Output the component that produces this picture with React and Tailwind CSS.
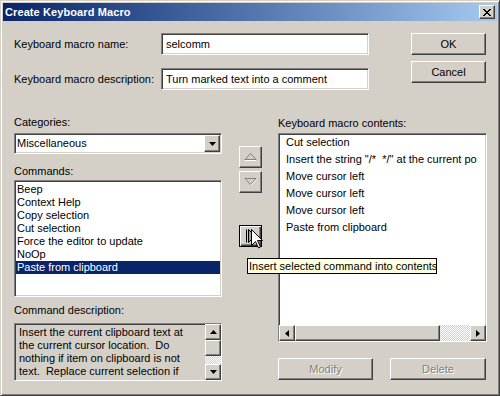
import React from 'react';

const sunken =
  'border border-t-[#808080] border-l-[#808080] border-r-white border-b-white shadow-[inset_1px_1px_0_#404040,inset_-1px_-1px_0_#d4d0c8]';
const raised =
  'border border-t-white border-l-white border-r-[#404040] border-b-[#404040] shadow-[inset_-1px_-1px_0_#808080]';
const dither =
  'bg-[repeating-conic-gradient(#ffffff_0_25%,#d4d0c8_0_50%)] bg-[length:2px_2px]';

function Arrow({ dir }) {
  const paths = {
    up: 'M3.5 0 L7 4 H0 Z',
    down: 'M0 0 H7 L3.5 4 Z',
    left: 'M4 0 V7 L0 3.5 Z',
    right: 'M0 0 V7 L4 3.5 Z',
  };
  const size = dir === 'up' || dir === 'down' ? [7, 4] : [4, 7];
  return (
    <svg width={size[0]} height={size[1]} viewBox={`0 0 ${size[0]} ${size[1]}`}>
      <path d={paths[dir]} fill="#000" />
    </svg>
  );
}

function ScrollButton({ dir, className = '' }) {
  return (
    <div className={`${raised} bg-[#d4d0c8] flex items-center justify-center ${className}`}>
      <Arrow dir={dir} />
    </div>
  );
}

function DisabledTriangle({ up }) {
  return (
    <svg width="13" height="8" viewBox="0 0 13 8">
      {up ? (
        <>
          <path d="M1 7.5 H12" stroke="#fff" />
          <path d="M6.5 0.5 L12 6.5 H1 Z" fill="#d4d0c8" stroke="#808080" />
        </>
      ) : (
        <>
          <path d="M7 7.5 L12.5 1" stroke="#fff" />
          <path d="M1 0.5 H12 L6.5 6.5 Z" fill="#d4d0c8" stroke="#808080" />
        </>
      )}
    </svg>
  );
}

export default function App() {
  const commands = [
    'Beep',
    'Context Help',
    'Copy selection',
    'Cut selection',
    'Force the editor to update',
    'NoOp',
    'Paste from clipboard',
  ];
  const contents = [
    'Cut selection',
    'Insert the string "/*\u00a0 */" at the current po',
    'Move cursor left',
    'Move cursor left',
    'Move cursor left',
    'Paste from clipboard',
  ];

  return (
    <div className="w-[500px] h-[396px] bg-[#d4d0c8] border border-t-[#d4d0c8] border-l-[#d4d0c8] border-r-[#404040] border-b-[#404040] shadow-[inset_1px_1px_0_#fff,inset_-1px_-1px_0_#808080] p-[2px] font-['Liberation_Sans',Arial,sans-serif] text-[11px] leading-[13px] text-black flex flex-col">
      {/* Title bar */}
      <div className="h-[18px] flex items-center justify-between bg-linear-to-r from-[#0a246a] to-[#a6caf0] pl-[2px] pr-[2px]">
        <span className="text-white font-bold text-[11px] tracking-[0.1px]">Create Keyboard Macro</span>
        <div className={`${raised} bg-[#d4d0c8] w-[16px] h-[14px] flex items-center justify-center`}>
          <svg width="8" height="7" viewBox="0 0 8 7">
            <path d="M0 0 L7 7 M1 0 L8 7 M7 0 L0 7 M8 0 L1 7" stroke="#000" strokeWidth="1" />
          </svg>
        </div>
      </div>

      {/* Name / description + OK, Cancel */}
      <div className="flex pl-[11px]">
        <div className="flex flex-col mt-[12px]">
          <div className="flex items-center h-[22px]">
            <span className="w-[147px]">Keyboard macro name:</span>
            <div className={`${sunken} bg-white w-[208px] h-[22px] pl-[4px] flex items-center`}>selcomm</div>
          </div>
          <div className="flex items-center h-[22px] mt-[13px]">
            <span className="w-[147px]">Keyboard macro description:</span>
            <div className={`${sunken} bg-white w-[208px] h-[22px] pl-[4px] flex items-center`}>
              Turn marked text into a comment
            </div>
          </div>
        </div>
        <div className="flex flex-col mt-[12px] ml-[42px]">
          <button className={`${raised} bg-[#d4d0c8] w-[75px] h-[22px]`}>OK</button>
          <button className={`${raised} bg-[#d4d0c8] w-[75px] h-[22px] mt-[6px]`}>Cancel</button>
        </div>
      </div>

      {/* Main section */}
      <div className="flex pl-[11px]">
        {/* Left column */}
        <div className="flex flex-col w-[208px]">
          <div className="mt-[26px] h-[13px]">Categories:</div>
          <div className={`${sunken} bg-white h-[21px] mt-[4px] flex items-center justify-between pr-[1px]`}>
            <span className="pl-[2px]">Miscellaneous</span>
            <ScrollButton dir="down" className="w-[16px] h-[17px]" />
          </div>
          <div className="mt-[11px] h-[13px]">Commands:</div>
          <div className={`${sunken} bg-white h-[117px] mt-[2px] px-[1px] pt-[2px]`}>
            {commands.map((c, i) => (
              <div
                key={i}
                className={`h-[13px] pl-[1px] ${i === 6 ? 'bg-[#0a246a] text-white' : ''}`}
              >
                {c}
              </div>
            ))}
          </div>
          <div className="mt-[7px] h-[13px]">Command description:</div>
          <div className={`${sunken} h-[58px] mt-[6px] flex`}>
            <div className="flex-1 pl-[4px] pt-[2px]">
              Insert the current clipboard text at
              <br />
              the current cursor location.&nbsp; Do
              <br />
              nothing if item on clipboard is not
              <br />
              text.&nbsp; Replace current selection if
            </div>
            <div className="w-[16px] flex flex-col">
              <ScrollButton dir="up" className="h-[16px]" />
              <div className={`${raised} bg-[#d4d0c8] h-[16px]`} />
              <div className={`${dither} flex-1`} />
              <ScrollButton dir="down" className="h-[16px]" />
            </div>
          </div>
        </div>

        {/* Middle column */}
        <div className="flex flex-col w-[23px] ml-[17px]">
          <div className={`${raised} bg-[#d4d0c8] h-[22px] mt-[56px] flex items-center justify-center`}>
            <DisabledTriangle up />
          </div>
          <div className={`${raised} bg-[#d4d0c8] h-[22px] mt-[3px] flex items-center justify-center`}>
            <DisabledTriangle />
          </div>
          <div className="relative mt-[32px]">
            <div className="border border-black h-[22px] bg-[#d4d0c8] shadow-[inset_1px_1px_0_#fff,inset_-1px_-1px_0_#404040,inset_-2px_-2px_0_#808080] flex items-center justify-center">
              <svg width="11" height="14" viewBox="0 0 11 14">
                <path d="M1.5 0.5 V13.5" stroke="#000" />
                <path d="M3.5 0.5 L10 7 L3.5 13.5 Z" fill="#a0a0a0" stroke="#000" />
              </svg>
            </div>
            {/* mouse cursor */}
            <svg className="absolute left-[12px] top-[4px]" width="12" height="20" viewBox="0 0 12 20">
              <path
                d="M0.5 0.5 V16.5 L4.5 12.5 L7.5 19 L9.5 18 L6.5 11.5 H11.5 Z"
                fill="#fff"
                stroke="#000"
                strokeLinejoin="miter"
              />
            </svg>
            {/* tooltip */}
            <div className="absolute left-[8px] top-[33px] w-[190px] h-[16px] bg-[#ffffe1] border border-black pl-[1px] leading-[14px] whitespace-nowrap z-10">
              Insert selected command into contents
            </div>
          </div>
        </div>

        {/* Right column */}
        <div className="flex flex-col w-[209px] ml-[16px]">
          <div className="mt-[27px] h-[13px]">Keyboard macro contents:</div>
          <div className={`${sunken} bg-white h-[209px] mt-[3px] flex flex-col`}>
            <div className="flex-1 overflow-hidden pl-[7px]">
              {contents.map((c, i) => (
                <div key={i} className="h-[17px] leading-[17px] whitespace-nowrap">
                  {c}
                </div>
              ))}
            </div>
            <div className="h-[16px] flex">
              <ScrollButton dir="left" className="w-[16px]" />
              <div className={`${raised} bg-[#d4d0c8] w-[145px]`} />
              <div className={`${dither} flex-1`} />
              <ScrollButton dir="right" className="w-[16px]" />
            </div>
          </div>
          <div className="flex mt-[16px]">
            <button className={`${raised} bg-[#d4d0c8] w-[95px] h-[22px] text-[#808080] [text-shadow:1px_1px_0_#fff]`}>
              Modify
            </button>
            <button className={`${raised} bg-[#d4d0c8] w-[96px] h-[22px] ml-[17px] text-[#808080] [text-shadow:1px_1px_0_#fff]`}>
              Delete
            </button>
          </div>
        </div>
      </div>
    </div>
  );
}
